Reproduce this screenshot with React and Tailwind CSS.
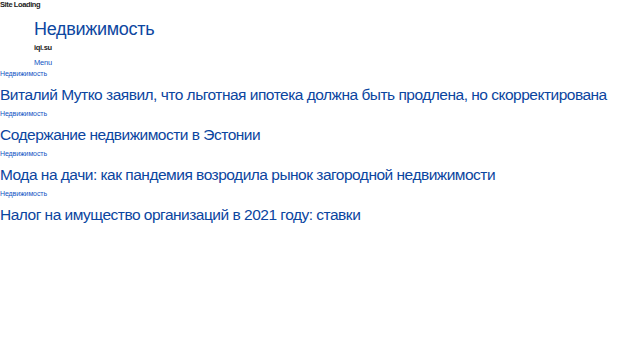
const posts = [
  "Виталий Мутко заявил, что льготная ипотека должна быть продлена, но скорректирована",
  "Содержание недвижимости в Эстонии",
  "Мода на дачи: как пандемия возродила рынок загородной недвижимости",
  "Налог на имущество организаций в 2021 году: ставки",
];

const App = () => {
  return (
    <div className="min-h-[343px] w-[620px] bg-white font-['Liberation_Sans',Arial,sans-serif] text-black">
      <div className="text-[7.5px] font-bold leading-[10px] tracking-[-0.4px] text-[#222]">Site Loading</div>

      <header className="pl-[34px]">
        <h1 className="mt-[8px] text-[18px] leading-[22px] tracking-[-0.3px] text-[#0d47a1]">Недвижимость</h1>
        <p className="mt-[3px] text-[7.5px] font-bold leading-[10px] tracking-[-0.3px] text-[#222]">iqi.su</p>
        <a href="#" className="mt-[5px] block text-[7.5px] leading-[10px] tracking-[-0.2px] text-[#1256c4]">Menu</a>
      </header>

      <main className="mt-[1px]">
        {posts.map((title) => (
          <article key={title}>
            <a href="#" className="block text-[7px] leading-[9px] tracking-[-0.1px] text-[#1256c4]">Недвижимость</a>
            <h2 className="mt-[7px] mb-[4px] whitespace-nowrap text-[15.5px] leading-[20px] tracking-[-0.5px] text-[#0b45a0]">{title}</h2>
          </article>
        ))}
      </main>
    </div>
  );
};

export default App;
